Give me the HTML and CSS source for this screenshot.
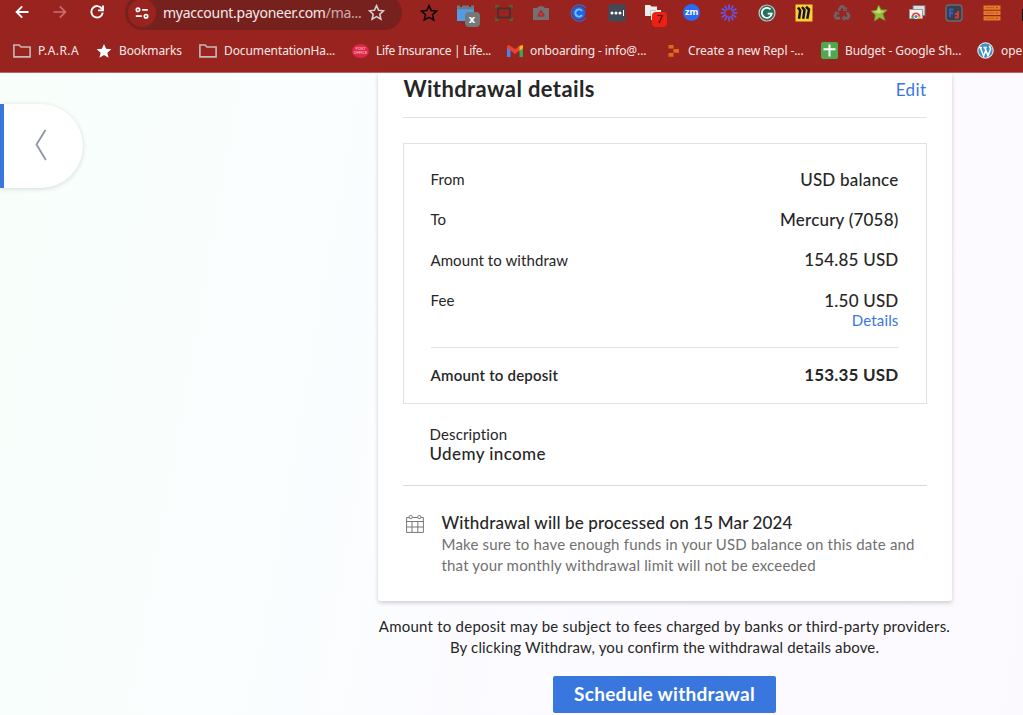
FILE: index.html
```html
<!DOCTYPE html>
<html lang="en">
<head>
  <meta charset="UTF-8" />
  <meta name="viewport" content="width=device-width, initial-scale=1.0"/>
  <title>Withdrawal details</title>
  <link rel="stylesheet" href="styles.css">
</head>
<body>
  <header class="browser">
    <div class="toolbar">
      <div class="nav">
        <svg width="14" height="14" viewBox="0 0 14 14" fill="none" stroke="#fff" stroke-width="1.9"><path d="M13.5 7H2M7.2 1.4L1.6 7l5.6 5.6"/></svg>
        <svg width="14" height="14" viewBox="0 0 14 14" fill="none" stroke="#c9706d" stroke-width="1.7"><path d="M.5 7H12M6.8 1.4L12.4 7l-5.6 5.6"/></svg>
        <svg width="14" height="14" viewBox="0 0 14 14" fill="none" stroke="#fff" stroke-width="1.9"><path d="M12 3.9A5.7 5.7 0 1 0 12.7 7.6M13 .6v4.8H8"/></svg>
      </div>
      <div class="url-bar">
        <span class="site-info">
          <svg width="14" height="14" viewBox="0 0 14 14" fill="none" stroke="#fff" stroke-width="1.7"><circle cx="3" cy="3.8" r="1.7"/><path d="M7.2 3.8h5.6M.8 10.2h6"/><circle cx="11" cy="10.2" r="1.7"/></svg>
        </span>
        <span class="url">myaccount.payoneer.com<span class="path">/ma...</span></span>
        <svg width="17" height="17" viewBox="0 0 18 18" fill="none" stroke="#d8cccc" stroke-width="1.7"><path d="M9 1.8l2.2 4.9 5.2.5-3.9 3.6 1.1 5.2L9 13.3 4.4 16l1.1-5.2L1.6 7.2l5.2-.5z"/></svg>
      </div>
      <div class="extensions">
        <span><svg width="18" height="18" viewBox="0 0 18 18" fill="none" stroke="#0c0505" stroke-width="1.5"><path d="M9 1.6l2.2 5 5.3.5-4 3.6 1.2 5.3L9 13.3 4.3 16l1.2-5.3-4-3.6 5.3-.5z"/></svg></span>
        <span><svg width="18" height="18" viewBox="0 0 18 18"><path fill="#519ce3" d="M0 5h17v12H0z"/><path fill="#77777b" d="M0 1.5h17v3.7H0z"/><path fill="#444" d="M3 1h2v2H3zM12 1h2v2h-2z"/></svg><b class="badge gray">x</b></span>
        <span><svg width="18" height="18" viewBox="0 0 18 18" fill="none"><path stroke="#403033" stroke-width="1.6" d="M3 4.5h12v9H3z"/><path stroke="#3f752b" stroke-width="1.4" d="M1 4.5V1.7h3M14 1.7h3v2.8M1 13.5v2.8h3M14 16.3h3v-2.8"/></svg></span>
        <span><svg width="18" height="18" viewBox="0 0 18 18"><path fill="#757073" d="M1 4h4l2-1.7h4L13 4h4v12H1z"/><path d="M9 6.8l2.8 5H6.2z" fill="none" stroke="#b22d2b" stroke-width="1.8" stroke-linejoin="round"/></svg></span>
        <span><svg width="18" height="18" viewBox="0 0 18 18" fill="none"><circle cx="9" cy="9" r="6.5" fill="#1d65eb"/><path stroke="#326bd0" stroke-width="1.2" d="M15.8 4.2A8.1 8.1 0 1 0 15.8 13.8"/><path stroke="#72c5ff" stroke-width="1.9" d="M12 7a3.6 3.6 0 1 0 0 4"/></svg></span>
        <span><svg width="18" height="18" viewBox="0 0 18 18"><rect x=".5" y=".5" width="17" height="17" rx="1.5" fill="#404b57"/><circle cx="4" cy="9" r="1.5" fill="#fff"/><circle cx="8" cy="9" r="1.5" fill="#fff"/><circle cx="12" cy="9" r="1.5" fill="#fff"/><path stroke="#fff" d="M15.5 6v6"/></svg></span>
        <span><svg width="18" height="18" viewBox="0 0 18 18"><path fill="#eee" d="M0 1h5l1.5 1.5H12V6h4v10H6v-4H0z"/><path fill="none" stroke="#c9c5c5" d="M5.5 12V6.5H11"/></svg><b class="badge red">7</b></span>
        <span><b class="zoom">zm</b></span>
        <span><svg width="18" height="18" viewBox="0 0 18 18" stroke="#625af0" stroke-width="1.6" fill="none"><path d="M9 .6v5M9 12.4v5M.6 9h5M12.4 9h5M4.8 1.7l2.5 4.4M10.7 11.9l2.5 4.4M1.7 4.8l4.4 2.5M11.9 10.7l4.4 2.5M1.7 13.2l4.4-2.5M11.9 7.3l4.4-2.5M4.8 16.3l2.5-4.4M10.7 6.1l2.5-4.4"/></svg></span>
        <span><svg width="18" height="18" viewBox="0 0 18 18" fill="none"><circle cx="9" cy="9" r="8" fill="#27705d" stroke="#c9c6bf" stroke-width="1.2"/><path stroke="#fff" stroke-width="1.8" d="M12.5 5.4a5 5 0 1 0 1.3 4.3H9.7"/></svg></span>
        <span><svg width="18" height="18" viewBox="0 0 18 18"><path fill="#ffd02f" d="M.5.5h17v17H.5z"/><path fill="none" stroke="#111434" stroke-width="2.5" d="M3 3.5l2.2 3L4 14.8M7 3l2.5 3-1.3 8.8M11 2.8l3 2.7-1.7 9.3"/></svg></span>
        <span><svg width="18" height="18" viewBox="0 0 18 18" fill="none" stroke="#6d6466" stroke-width="2.7"><path d="M5.5 6.5l2.7-4h2l1.6 2.7M14 8.2l2 3.6-1.1 2.4h-4.2M7.2 14.2H3L1.8 12l2-3.4"/><path stroke-width="1.3" d="M13.3 2.8v3.6H10M11.6 11.8l-2.2 2.4 2.2 2.4M1.7 8.3h3.3l1 2.7"/></svg></span>
        <span><svg width="18" height="18" viewBox="0 0 18 18"><path fill="#93bd3e" stroke="#71892c" stroke-width=".7" d="M8.7 1l2.6 4.7 6 .2-4.4 4 2.3 6.6-5.7-2.8-5.2 3.5 1-6.3L1 7.1l5.5-1z"/><path fill="#c8dc74" d="M8.7 2.5l1.7 4.2 4 .4-5.6 2.4L3 7.5l4.2-.7z"/></svg></span>
        <span><svg width="18" height="18" viewBox="0 0 18 18"><path fill="#ddd" stroke="#777" d="M5 1.5h12v10H5z"/><path fill="#f4f4f4" stroke="#999" d="M1.5 5.5h13v9h-13z"/><path fill="#e34436" d="M3.5 13a4.5 4.5 0 0 1 9 0z"/><path fill="#45a353" d="M3.5 12.5v2H8v-2z"/><path fill="#f4bf28" d="M8 14.5h4.5v-2H8z"/><circle cx="8" cy="12.5" r="2" fill="#3878e4" stroke="#fff"/></svg></span>
        <span><svg width="18" height="18" viewBox="0 0 18 18" fill="none"><rect x="1" y="1" width="16" height="16" rx="3" fill="#39404a" stroke="#686b71" stroke-width="1.4"/><path stroke="#315fd1" stroke-width="1.8" d="M5 13V5.5h3.5M5 9h3"/><path stroke="#e13a35" stroke-width="1.8" d="M10 13.5h3V7M10 10h3"/></svg></span>
        <span><svg width="18" height="18" viewBox="0 0 18 18"><path fill="#e77b25" d="M.5 1.5h17v4.2H.5zM.5 6.8h17V11H.5zM.5 12.2h17v4.2H.5z"/><path stroke="#b5541b" stroke-width=".8" d="M2.5 3.6H11M2.5 8.9H11M2.5 14.3H11"/><path stroke="#8e3d1b" d="M13 3.6h1.5M13 8.9h1.5M13 14.3h1.5"/></svg></span>
        <span><svg width="18" height="18" viewBox="0 0 18 18"><path fill="#161114" d="M1 5h4V2h5v3h7v12H1z"/></svg></span>
      </div>
    </div>
    <nav class="bookmarks">
      <a class="wide"><svg class="folder" width="18" height="14" viewBox="0 0 18 14"><path d="M.9 12.2V1h5.3l1.8 2h9.1v9.9H.9z"/></svg>P.A.R.A</a>
      <a><svg width="16" height="16" viewBox="0 0 16 16"><path fill="#fff" d="M8 1l2.1 4.7 5.2.5-3.9 3.5 1.1 5.1L8 12.1l-4.5 2.7 1.1-5.1L.7 6.2l5.2-.5z"/></svg>Bookmarks</a>
      <a><svg class="folder" width="18" height="14" viewBox="0 0 18 14"><path d="M.9 12.2V1h5.3l1.8 2h9.1v9.9H.9z"/></svg>DocumentationHa...</a>
      <a class="narrow"><span class="post-office">POST<br>OFFICE</span>Life Insurance | Life...</a>
      <a><svg width="16" height="16" viewBox="0 0 16 16"><path fill="#4285f4" d="M0 3.5l3.5 2.7V14H0z"/><path fill="#34a853" d="M12.5 6.2L16 3.5V14h-3.5z"/><path fill="#ea4335" d="M0 3l2.2-1L8 6.2 13.8 2l-1.3 5.5L8 11 3.5 7.5 0 5z"/><path fill="#fbbc04" d="M12.5 3L16 2v3.2l-3.5 2.5z"/></svg>onboarding - info@...</a>
      <a><svg width="16" height="16" viewBox="0 0 16 16"><path fill="#e46a1b" d="M3.5 2h5v3.6h-5zM8.5 5.9h5.5v3.8H8.5zM3.5 10h5v3.7h-5z"/></svg>Create a new Repl -...</a>
      <a><svg width="17" height="17" viewBox="0 0 17 17"><rect width="17" height="17" rx="2" fill="#50a850"/><path stroke="#fff" stroke-width="2" d="M2.5 7.3h12M8.5 2.5v12"/></svg>Budget - Google Sh...</a>
      <a><svg width="17" height="17" viewBox="0 0 17 17" fill="none"><circle cx="8.5" cy="8.5" r="7.7" fill="#3c91c4" stroke="#fff"/><path stroke="#fff" stroke-width="1.5" d="M2 5.4h3M6.5 5.4h3.2M3.2 5.4L6.6 14l2-5.3M7.8 5.4l3.2 8.4 2.5-6.5c.4-1.6-1-2-1-3.6"/></svg>ope</a>
    </nav>
  </header>

  <main>
    <button class="back" aria-label="Back">
      <svg width="12" height="32" viewBox="0 0 12 32" fill="none" stroke="#8c95a5" stroke-width="1.8"><path d="M10.5 1L1.5 15.5 10.8 31"/></svg>
    </button>

    <div class="content">
      <section class="card">
        <div class="card-head">
          <h1>Withdrawal details</h1>
          <a class="edit">Edit</a>
        </div>
        <div class="summary">
          <div class="row"><span>From</span><b>USD balance</b></div>
          <div class="row"><span>To</span><b>Mercury (7058)</b></div>
          <div class="row"><span>Amount to withdraw</span><b>154.85 USD</b></div>
          <div class="row"><span>Fee</span><b>1.50 USD</b></div>
          <a class="details">Details</a>
          <div class="row total"><span>Amount to deposit</span><b>153.35 USD</b></div>
        </div>
        <div class="description">
          <div class="label">Description</div>
          <div class="value">Udemy income</div>
        </div>
        <div class="schedule">
          <svg width="18" height="18" viewBox="0 0 18 18" fill="none" stroke="#77787b" stroke-width="1"><path d="M.6 2.5h16.8v14.9H.6zM.6 6.5h16.8M.6 12h16.8M6 6.5v11M11.8 6.5v11"/><rect x="3.2" y=".6" width="3" height="3" rx="1" fill="#fff"/><rect x="11.8" y=".6" width="3" height="3" rx="1" fill="#fff"/></svg>
          <div>
            <h2>Withdrawal will be processed on 15 Mar 2024</h2>
            <p>Make sure to have enough funds in your USD balance on this date and<br>that your monthly withdrawal limit will not be exceeded</p>
          </div>
        </div>
      </section>
      <p class="note">Amount to deposit may be subject to fees charged by banks or third-party providers.<br><span>By clicking Withdraw, you confirm the withdrawal details above.</span></p>
      <button class="submit">Schedule withdrawal</button>
    </div>
  </main>
</body>
</html>
```
FILE: styles.css
```css
* {
  box-sizing: border-box;
}
body {
  margin: 0;
  height: 715px;
  overflow: hidden;
  font-family: Lato, "Liberation Sans", sans-serif;
  color: #262626;
  background: linear-gradient(100deg, #f8fffa 0%, #fafeff 30%, #fcfbff 55%, #fcf9fe 100%);
}
button {
  border: 0;
  padding: 0;
  font-family: inherit;
}
svg {
  display: block;
  flex: none;
}

/* browser bars */
.browser {
  height: 73px;
  overflow: hidden;
  background: #98231f;
  border-bottom: 1px solid #bd6562;
  color: #f6e9e8;
  font-family: "Noto Sans", sans-serif;
}
.toolbar {
  display: flex;
  height: 30px;
}
.nav {
  display: flex;
  flex: none;
  gap: 23.5px;
  width: 125px;
  padding: 5px 0 0 15px;
}
.url-bar {
  display: flex;
  flex: none;
  align-items: center;
  width: 277px;
  height: 35px;
  margin-top: -5px;
  padding-left: 3px;
  border-radius: 18px;
  background: #77211f;
}
.site-info {
  display: flex;
  align-items: center;
  justify-content: center;
  width: 28px;
  height: 28px;
  border-radius: 50%;
  background: #98231f;
}
.url {
  width: 205px;
  margin-left: 7px;
  font-size: 14px;
  letter-spacing: -0.25px;
  white-space: nowrap;
}
.path {
  color: #cbaeae;
}
.extensions {
  display: flex;
  margin-left: 8px;
}
.extensions > span {
  position: relative;
  display: flex;
  align-items: center;
  justify-content: center;
  flex: none;
  width: 37.55px;
  height: 25px;
}
.badge {
  position: absolute;
  left: 17px;
  top: 12px;
  width: 15px;
  height: 15px;
  border-radius: 4px;
  font-size: 11px;
  line-height: 14px;
  text-align: center;
}
.gray {
  background: #73787a;
  color: #fff;
}
.red {
  background: #ee2010;
  color: #331010;
  font-weight: 500;
}
.zoom {
  width: 17px;
  height: 17px;
  border-radius: 50%;
  background: #2a6bf2;
  color: #fff;
  font-size: 9px;
  line-height: 15px;
  text-align: center;
}
.bookmarks {
  display: grid;
  grid-template-columns: 83px 103px 153px 155px 158px 156px 156px 60px;
  align-items: center;
  height: 41px;
  padding-left: 13px;
  font-size: 12px;
  letter-spacing: -0.1px;
}
.bookmarks a {
  display: flex;
  align-items: center;
  gap: 7px;
  white-space: nowrap;
}
.bookmarks .wide {
  letter-spacing: 0.4px;
}
.bookmarks .narrow {
  letter-spacing: -0.3px;
}
.folder {
  fill: none;
  stroke: #c6b9b8;
  stroke-width: 1.6;
}
.post-office {
  width: 17px;
  height: 14px;
  padding-top: 3px;
  border-radius: 50%;
  background: #df2848;
  color: #ffd9df;
  font-size: 4px;
  line-height: 4px;
  letter-spacing: 0;
  text-align: center;
}

/* page */
main {
  display: flex;
  align-items: flex-start;
}
.back {
  display: flex;
  align-items: center;
  width: 83px;
  height: 84px;
  margin-top: 31px;
  padding: 0 0 2px 31px;
  border-left: 4px solid #3977df;
  border-radius: 0 42px 42px 0;
  background: #fff;
  box-shadow: 0 1px 5px rgba(0, 0, 0, 0.15);
}
.content {
  display: flex;
  flex-direction: column;
  align-items: center;
  width: 574px;
  margin-left: 294.5px;
}
.card {
  width: 574px;
  height: 528px;
  padding: 0 25px;
  border-radius: 0 0 3px 3px;
  background: #fff;
  box-shadow: 0 2px 4px rgba(0, 0, 0, 0.18);
}
.card-head {
  display: flex;
  justify-content: space-between;
  height: 45px;
  border-bottom: 1px solid #e2e2e2;
}
h1 {
  margin: 0 0 0 1px;
  font-size: 22px;
  line-height: 32px;
  font-weight: 700;
  letter-spacing: 0.38px;
}
.edit,
.details {
  color: #3977df;
}
.edit {
  font-size: 17px;
  line-height: 33px;
  letter-spacing: 0.4px;
}
.summary {
  height: 261px;
  margin-top: 25px;
  padding: 15px 27px 0;
  border: 1px solid #e2e2e2;
}
.row {
  display: flex;
  align-items: center;
  justify-content: space-between;
  height: 40.3px;
  font-size: 15px;
  letter-spacing: 0.08px;
}
.row b {
  font-size: 17px;
  font-weight: 500;
  letter-spacing: 0.2px;
}
.details {
  display: block;
  margin-top: -9px;
  font-size: 15px;
  line-height: 18px;
  letter-spacing: 0.15px;
  text-align: right;
}
.total {
  height: 54px;
  margin-top: 18px;
  border-top: 1px solid #e2e2e2;
  font-weight: 600;
  letter-spacing: 0.2px;
}
.total b {
  font-weight: 700;
}
.description {
  height: 82px;
  padding: 20px 27px 0;
  border-bottom: 1px solid #d9d9d9;
}
.label {
  font-size: 15px;
  line-height: 20px;
  letter-spacing: 0.15px;
}
.value {
  font-size: 17px;
  line-height: 20px;
  font-weight: 500;
  letter-spacing: 0.4px;
}
.schedule {
  display: flex;
  gap: 18px;
  padding: 25px 0 0 3px;
  white-space: nowrap;
}
.schedule svg {
  margin-top: 4px;
}
h2 {
  margin: 0;
  font-size: 17px;
  line-height: 23px;
  font-weight: 500;
  letter-spacing: 0.14px;
}
.schedule p {
  margin: 0;
  color: #707070;
  font-size: 15px;
  line-height: 21px;
  letter-spacing: 0.18px;
}
.note {
  margin: 15px 0 18px;
  font-size: 15px;
  line-height: 21px;
  letter-spacing: 0.225px;
  text-align: center;
  white-space: nowrap;
}
.note span {
  letter-spacing: 0.15px;
}
.submit {
  width: 223px;
  height: 37px;
  padding-bottom: 3px;
  border-radius: 2px;
  background: #3977df;
  color: #fff;
  font-size: 19px;
  font-weight: 700;
  letter-spacing: 0.27px;
}
```
